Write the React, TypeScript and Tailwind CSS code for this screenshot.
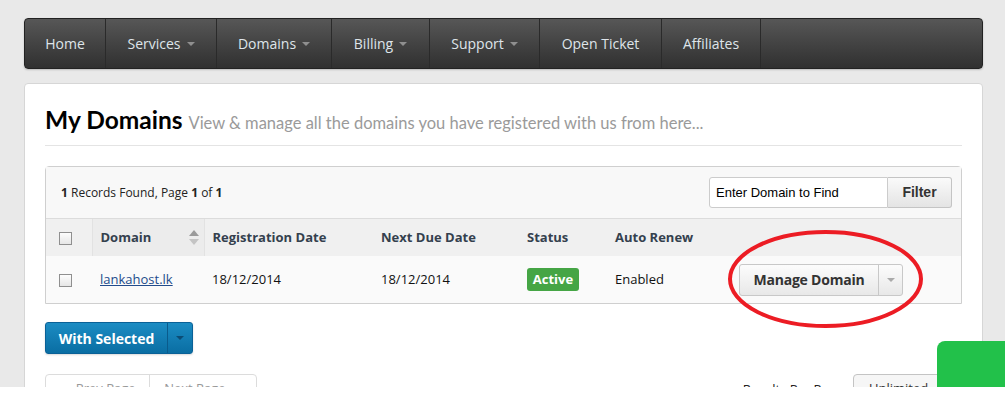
import React from "react";

const navItems = [
  { label: "Home", w: "w-[81px]", caret: false },
  { label: "Services", w: "w-[111px]", caret: true },
  { label: "Domains", w: "w-[115px]", caret: true },
  { label: "Billing", w: "w-[98px]", caret: true },
  { label: "Support", w: "w-[110px]", caret: true },
  { label: "Open Ticket", w: "w-[122px]", caret: false },
  { label: "Affiliates", w: "w-[99px]", caret: false },
];

const Caret = ({ className = "" }: { className?: string }) => (
  <span
    className={`inline-block w-0 h-0 border-l-[4px] border-r-[4px] border-t-[4px] border-l-transparent border-r-transparent ${className}`}
  />
);

const Checkbox = () => (
  <span className="inline-block w-[13px] h-[13px] border border-[#8f8f8f] bg-gradient-to-b from-[#fdfdfd] to-[#e6e6e6] align-middle" />
);

const SortIcon = () => (
  <svg width="10" height="15" viewBox="0 0 10 15" className="ml-auto">
    <polygon points="5,0 10,6 0,6" fill="#9a9a9a" />
    <polygon points="0,9 10,9 5,15" fill="#c4c4c4" />
  </svg>
);

const App = () => {
  return (
    <div className="h-[394px] w-[1005px] bg-white overflow-hidden" style={{ fontFamily: "'Open Sans', sans-serif" }}>
      <div className="relative h-[387px] overflow-hidden bg-[#e9e9e9] pl-[24px] pr-[22px] pt-[18px]">
        {/* navbar */}
        <nav className="flex h-[51px] rounded-[4px] bg-gradient-to-b from-[#575757] to-[#303030] border border-[#222] shadow-[0_1px_2px_rgba(0,0,0,0.2)]">
          {navItems.map((item) => (
            <div
              key={item.label}
              className={`${item.w} flex items-center justify-center gap-[6px] border-r border-[#2a2a2a] text-[14px] text-[#dfe5ea]`}
            >
              {item.label}
              {item.caret && <Caret className="border-t-[#8f8f8f]" />}
            </div>
          ))}
        </nav>

        {/* main card */}
        <div className="mt-[14px] h-[340px] rounded-[4px] border border-[#d6d6d6] bg-white px-[20px] pt-[20px]">
          <div className="flex items-baseline gap-[6px] border-b border-[#e4e4e4] pb-[9px]" style={{ fontFamily: "Lato, sans-serif" }}>
            <h1 className="text-[24.5px] font-bold text-black leading-[32px]">My Domains</h1>
            <span className="text-[16.5px] text-[#9a9a9a]">
              View &amp; manage all the domains you have registered with us from here...
            </span>
          </div>

          {/* table panel */}
          <div className="mt-[20px] rounded-t-[4px] border border-[#cfcfcf]">
            <div className="flex h-[52px] items-center justify-between bg-[#f8f8f8] border-b border-[#dcdcdc] pl-[15px] pr-[9px] text-[12px] text-[#222]">
              <div>
                <b>1</b> Records Found, Page <b>1</b> of <b>1</b>
              </div>
              <div className="flex" style={{ fontFamily: "Arial, 'Liberation Sans', sans-serif" }}>
                <div className="w-[179px] h-[31px] flex items-center px-[6px] border border-[#ccc] rounded-l-[3px] bg-white text-[13px] text-black">
                  Enter Domain to Find
                </div>
                <div className="w-[64px] h-[31px] flex items-center justify-center border border-l-0 border-[#c4c4c4] rounded-r-[3px] bg-gradient-to-b from-[#fafafa] to-[#e4e4e4] text-[14px] font-bold text-[#333]">
                  Filter
                </div>
              </div>
            </div>

            <table className="w-full table-fixed border-collapse text-[13px]">
              <colgroup>
                <col className="w-[46px]" />
                <col className="w-[112px]" />
                <col className="w-[169px]" />
                <col className="w-[146px]" />
                <col className="w-[88px]" />
                <col className="w-[117px]" />
                <col />
              </colgroup>
              <thead>
                <tr className="h-[37px] bg-[#f0f0f0] text-left text-[#34404e] font-bold">
                  <th className="pl-[13px] font-normal"><Checkbox /></th>
                  <th className="bg-[#ececec] border-l border-r border-[#e2e2e2] pl-[8px] pr-[5px]">
                    <div className="flex items-center">Domain<SortIcon /></div>
                  </th>
                  <th className="pl-[8px]">Registration Date</th>
                  <th className="pl-[8px]">Next Due Date</th>
                  <th className="pl-[8px]">Status</th>
                  <th className="pl-[8px]">Auto Renew</th>
                  <th />
                </tr>
              </thead>
              <tbody>
                <tr className="h-[47px] bg-[#fafafa] text-[#111]">
                  <td className="pl-[13px]"><Checkbox /></td>
                  <td className="pl-[8px]">
                    <span className="text-[#224b8b] underline">lankahost.lk</span>
                  </td>
                  <td className="pl-[8px]">18/12/2014</td>
                  <td className="pl-[8px]">18/12/2014</td>
                  <td className="pl-[8px]">
                    <span className="inline-flex h-[23px] w-[52px] items-center justify-center rounded-[3px] bg-[#45a545] font-bold text-white">
                      Active
                    </span>
                  </td>
                  <td className="pl-[8px]">Enabled</td>
                  <td className="pl-[15px]">
                    <div className="inline-flex h-[32px] rounded-[3px] border border-[#c8c8c8] bg-gradient-to-b from-[#fcfcfc] to-[#e8e8e8] text-[14px] font-bold text-[#333] tracking-[-0.2px]">
                      <span className="flex w-[139px] items-center justify-center border-r border-[#c8c8c8]">Manage Domain</span>
                      <span className="flex w-[23px] items-center justify-center">
                        <Caret className="border-t-[#aaa]" />
                      </span>
                    </div>
                  </td>
                </tr>
              </tbody>
            </table>
          </div>

          {/* with selected */}
          <div className="mt-[18px] inline-flex h-[32px] rounded-[3px] bg-gradient-to-b from-[#1b8cc3] to-[#0a6ea3] border border-[#0a6197] text-[14px] font-bold text-white shadow-[0_1px_2px_rgba(0,0,0,0.15)]">
            <span className="flex w-[122px] items-center justify-center border-r border-[#0a5b8c]">With Selected</span>
            <span className="flex w-[24px] items-center justify-center">
              <Caret className="border-t-[#0b4c75]" />
            </span>
          </div>

          {/* pagination row */}
          <div className="mt-[20px] flex items-start justify-between text-[13px]">
            <div className="flex h-[30px] rounded-[4px] border border-[#dcdcdc] text-[#999]">
              <span className="flex w-[104px] items-center justify-center border-r border-[#dcdcdc]">← Prev Page</span>
              <span className="flex w-[106px] items-center justify-center">Next Page →</span>
            </div>
            <div className="flex items-start gap-[10px] mr-[-1px]">
              <span className="pt-[6px] text-[#222]">Results Per Page</span>
              <div className="h-[30px] w-[110px] rounded-[4px] border border-[#c4c4c4] bg-[#f6f6f6] flex items-center pl-[15px] text-[#333]">
                Unlimited
              </div>
            </div>
          </div>
        </div>

        {/* annotation ellipse */}
        <svg className="absolute left-[726px] top-[228px]" width="200" height="104" viewBox="0 0 200 104">
          <ellipse cx="99.5" cy="51" rx="95.5" ry="47" fill="none" stroke="#ec1c24" strokeWidth="4" />
        </svg>

        {/* chat widget */}
        <div className="absolute left-[937px] top-[341px] h-[60px] w-[80px] rounded-tl-[8px] bg-[#22c14a]" />
      </div>
    </div>
  );
};

export default App;
